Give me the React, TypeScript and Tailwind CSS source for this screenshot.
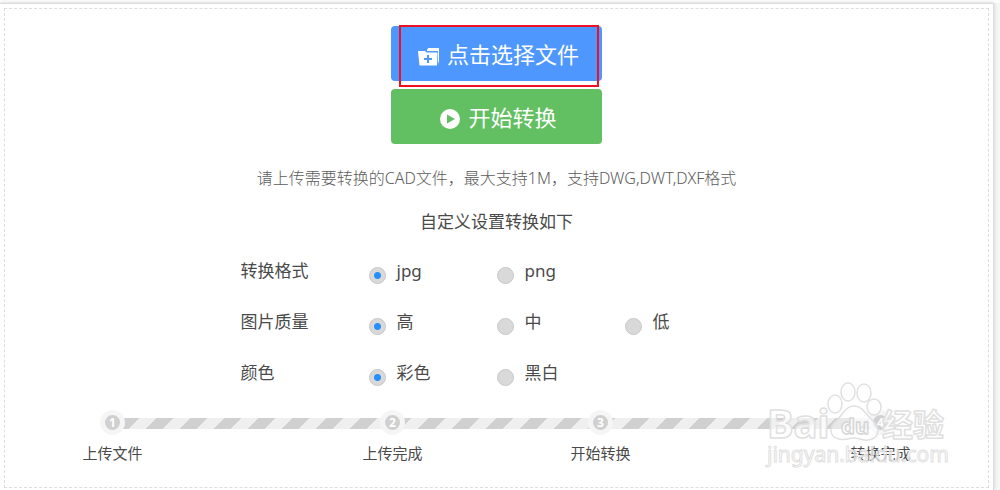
interface OptionGroup {
  name: string;
  label: string;
  options: string[];
}

const GROUPS: OptionGroup[] = [
  { name: "format", label: "转换格式", options: ["jpg", "png"] },
  { name: "quality", label: "图片质量", options: ["高", "中", "低"] },
  { name: "color", label: "颜色", options: ["彩色", "黑白"] },
];

const STEPS = ["上传文件", "上传完成", "开始转换", "转换完成"];

export default function App() {
  return (
    <div className="min-h-screen bg-[#f6f6f6] pt-[3px] pr-[6px] font-['Noto_Sans','Noto_Sans_CJK_SC',sans-serif] text-[#4a4a4a] shadow-[inset_0_3px_0_#fff]">
      <main className="flow-root min-h-[calc(100vh-3px)] border-t border-r border-[#dcdcdc] bg-white shadow-[0_0_4px_#ccc]">
        <div className="relative mt-[4px] mr-[4px] ml-[4px] border border-dashed border-[#ddd] pt-[17px] pb-[22px]">
          <div className="flex flex-col items-center gap-2 text-[22px] text-white">
            <div className="relative">
              <button
                type="button"
                className="flex h-[55px] w-[211px] items-center justify-center gap-2 rounded bg-[#4d97ff] pt-px pl-1"
              >
                <FolderIcon />
                点击选择文件
              </button>
              <div className="pointer-events-none absolute -top-px left-2 h-[62px] w-[200px] border-2 border-[#ee1122]" />
            </div>
            <button
              type="button"
              className="flex h-[55px] w-[211px] items-center justify-center gap-2 rounded bg-[#62bf62] pt-px pl-1"
            >
              <PlayIcon />
              开始转换
            </button>
          </div>

          <p className="mt-[22px] text-center text-[16px] leading-6 font-light text-[#5c5c5c]">
            请上传需要转换的CAD文件，最大支持1M，支持DWG,DWT,DXF格式
          </p>
          <h2 className="mt-[20px] text-center text-[17px] leading-6">
            自定义设置转换如下
          </h2>

          <form className="mx-auto mt-[11px] max-w-[512px]">
            {GROUPS.map((group) => (
              <RadioRow key={group.name} group={group} />
            ))}
          </form>

          <Steps />
          <Watermark />
        </div>
      </main>
    </div>
  );
}

function RadioRow({ group }: { group: OptionGroup }) {
  return (
    <div
      role="radiogroup"
      aria-labelledby={`${group.name}-label`}
      className="grid h-[51px] grid-cols-4 items-center text-[17px]"
    >
      <span id={`${group.name}-label`}>{group.label}</span>
      {group.options.map((option, i) => (
        <label key={option} className="flex items-center gap-[11px]">
          <input
            type="radio"
            name={group.name}
            defaultChecked={i === 0}
            className="mt-[10px] size-[17px] appearance-none rounded-full border border-[#c8c8c8] bg-[#d9d9d9] checked:bg-[radial-gradient(circle,#2490f8_3px,#d9d9d9_4px)]"
          />
          {option}
        </label>
      ))}
    </div>
  );
}

function Steps() {
  return (
    <div className="relative mx-auto mt-[12px] max-w-[832px]">
      <div className="absolute top-[8px] right-[32px] left-[42px] h-[11px] bg-[repeating-linear-gradient(135deg,#d0d0d0_0,#d0d0d0_12px,#efefef_12px,#efefef_24px)]" />
      <ol className="relative grid grid-cols-[280fr_208fr_280fr_64px]">
        {STEPS.map((step, i) => (
          <li key={step} className="flex w-16 flex-col items-center">
            <span className="flex size-[25px] items-center justify-center rounded-full border-[5px] border-[#f5f5f5] bg-[#d0d0d0] text-[12px] font-bold text-white">
              {i + 1}
            </span>
            <span className="mt-[6px] text-[15px] leading-6 whitespace-nowrap">
              {step}
            </span>
          </li>
        ))}
      </ol>
    </div>
  );
}

function FolderIcon() {
  return (
    <svg width="21" height="19" viewBox="0 0 21 19" className="mt-1">
      <path d="M9 2.500l1.500-1.500H21v13l-1 3V4H9z" fill="#fff" />
      <path d="M0 4h7l1.500 1.500H19.500L19 18.500H1.500z" fill="#fff" />
      <path d="M10 8v8M6 12h8" stroke="#4d97ff" strokeWidth="2" />
    </svg>
  );
}

function PlayIcon() {
  return (
    <svg width="20" height="20" viewBox="0 0 20 20" className="mt-1">
      <circle cx="10" cy="10" r="10" fill="#fff" />
      <path d="M7 5.500v9l8-4.500z" fill="#62bf62" />
    </svg>
  );
}

function Watermark() {
  return (
    <svg
      width="184"
      height="92"
      viewBox="0 0 184 92"
      className="pointer-events-none absolute right-[40px] bottom-[15px]"
      aria-hidden="true"
      fill="#fff"
      fillOpacity="0.7"
      stroke="#e0e0e0"
      strokeWidth="1.5"
      strokeLinejoin="round"
    >
      <g
        fontFamily="Noto Sans, Noto Sans CJK SC, sans-serif"
        fontWeight="bold"
      >
        <text x="3" y="58" fontSize="40">
          Bai
        </text>
        <text x="118" y="56" fontSize="31">
          经验
        </text>
        <text
          x="3"
          y="82"
          fontSize="21"
          fontWeight="normal"
          fillOpacity="0.5"
          strokeWidth="1"
        >
          jingyan.baidu.com
        </text>
      </g>
      <ellipse cx="71" cy="24" rx="7" ry="9" />
      <ellipse cx="84" cy="12" rx="7" ry="9" />
      <ellipse cx="100" cy="13" rx="7" ry="9" />
      <ellipse cx="110" cy="27" rx="7" ry="8" />
      <path
        d="M90 26c9 0 12 9 19 15 8 7 6 18-5 19-6 1-9-2-14-2s-9 3-15 1c-10-2-10-12-3-18 7-6 9-15 18-15z"
        fillOpacity="0.5"
      />
      <text
        x="77"
        y="54"
        fontSize="22"
        fontWeight="bold"
        fontFamily="Noto Sans, sans-serif"
        stroke="#d6d6d6"
      >
        du
      </text>
    </svg>
  );
}
